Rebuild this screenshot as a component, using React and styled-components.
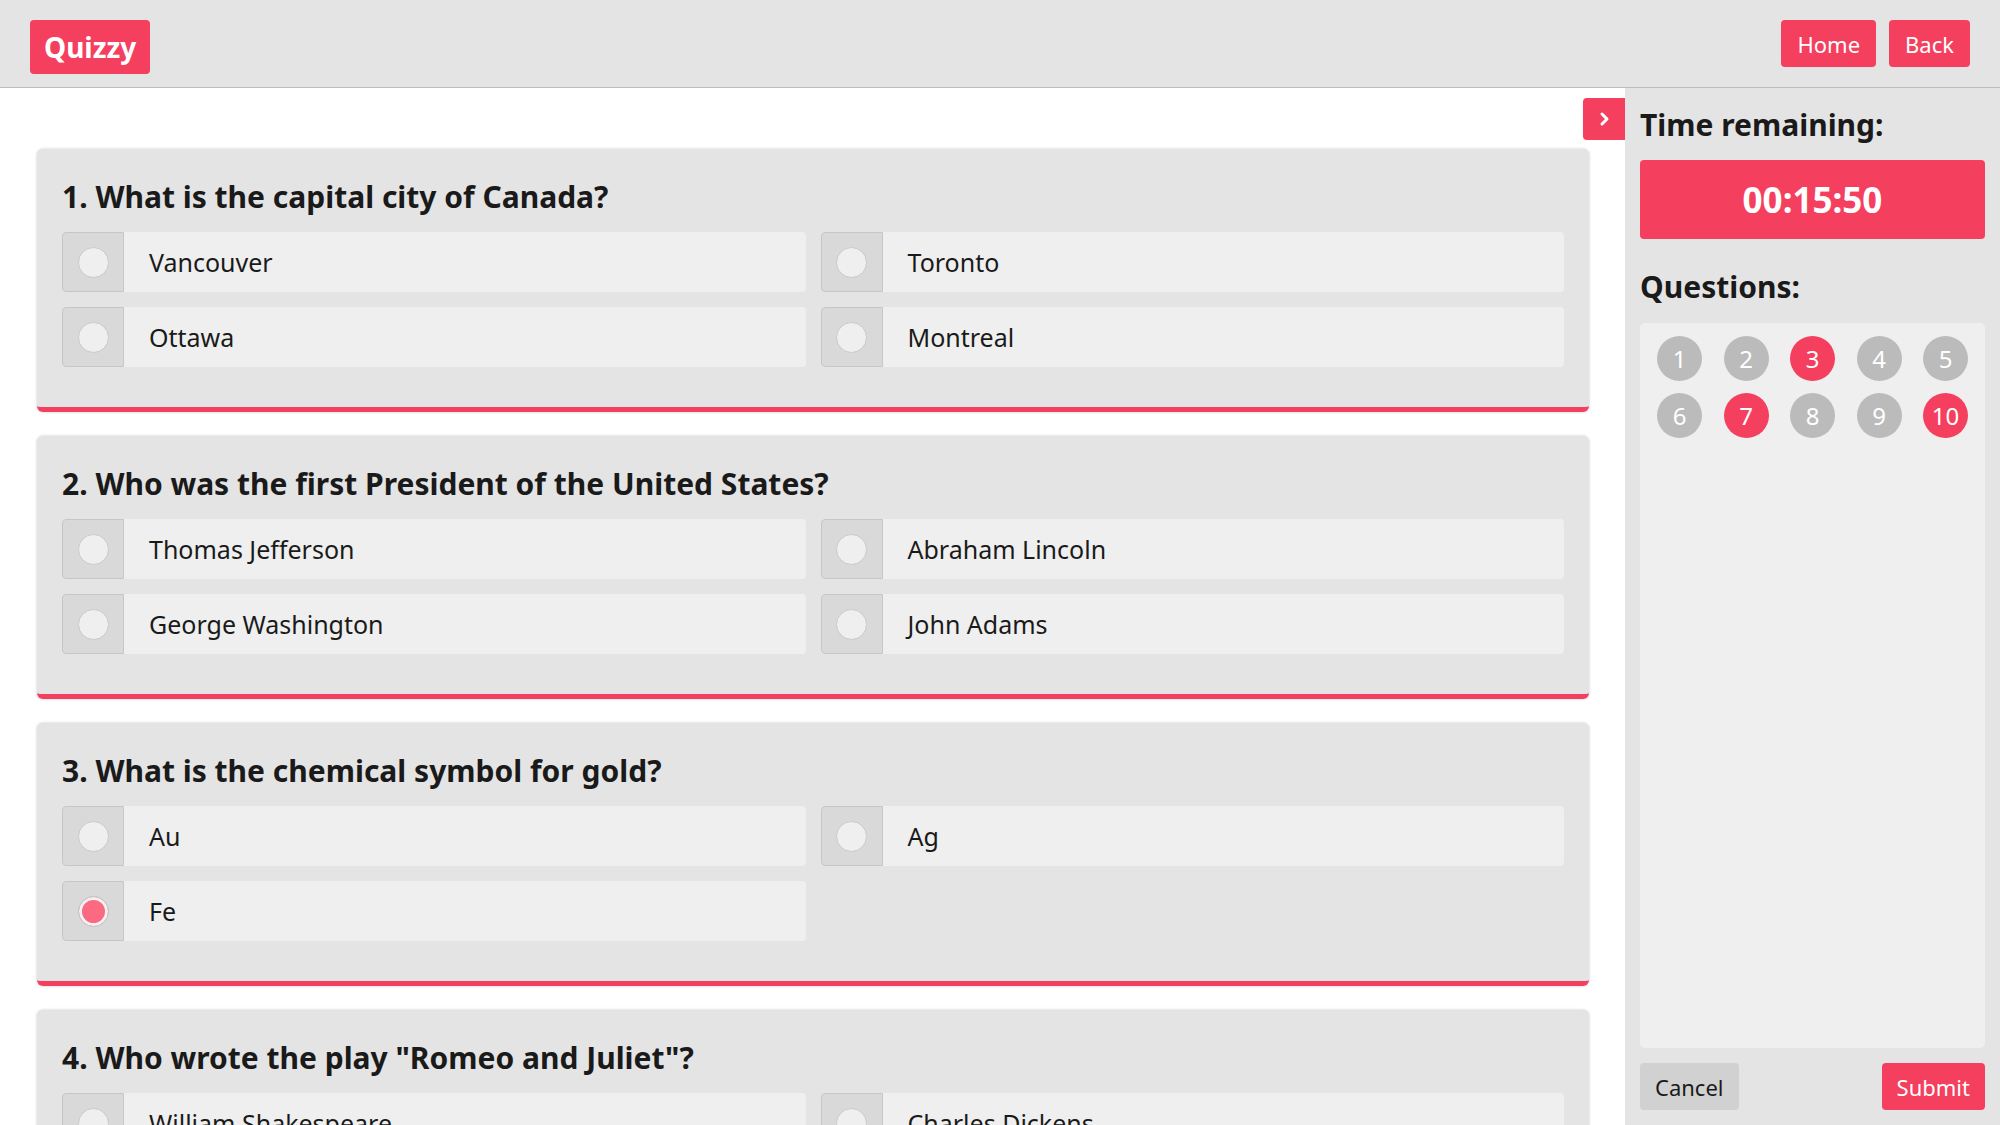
import styled, { createGlobalStyle } from "styled-components";

const PINK = "#f43f5e";

const questions = [
  {
    text: "What is the capital city of Canada?",
    options: ["Vancouver", "Toronto", "Ottawa", "Montreal"],
    selected: null,
  },
  {
    text: "Who was the first President of the United States?",
    options: ["Thomas Jefferson", "Abraham Lincoln", "George Washington", "John Adams"],
    selected: null,
  },
  {
    text: "What is the chemical symbol for gold?",
    options: ["Au", "Ag", "Fe"],
    selected: 2,
  },
  {
    text: 'Who wrote the play "Romeo and Juliet"?',
    options: ["William Shakespeare", "Charles Dickens", "Jane Austen", "Mark Twain"],
    selected: null,
  },
];

const answered = [3, 7, 10];

const GlobalStyle = createGlobalStyle`
  * { box-sizing: border-box; }
  body {
    margin: 0;
    font-family: "Noto Sans", "Open Sans", sans-serif;
    color: #1a1a1a;
  }
`;

const Page = styled.div`
  height: 100vh;
  display: flex;
  flex-direction: column;
  overflow: hidden;
`;

const Header = styled.header`
  height: 88px;
  flex-shrink: 0;
  background: #e4e4e4;
  border-bottom: 1px solid #bdbdbd;
  display: flex;
  align-items: flex-start;
  justify-content: space-between;
  padding: 20px 30px 0 30px;
`;

const Logo = styled.div`
  background: ${PINK};
  color: #fff;
  font-weight: 700;
  font-size: 28px;
  height: 54px;
  padding: 0 14px;
  display: flex;
  align-items: center;
  border-radius: 4px;
`;

const Nav = styled.div`
  display: flex;
  gap: 13px;
`;

const NavButton = styled.button`
  background: ${PINK};
  color: #fff;
  border: none;
  border-radius: 4px;
  height: 47px;
  padding: 0 16px;
  font-family: inherit;
  font-size: 22px;
`;

const Body = styled.div`
  flex: 1;
  display: flex;
  min-height: 0;
`;

const Main = styled.main`
  flex: 1;
  overflow: hidden;
  padding: 61px 36px 0 37px;
  display: flex;
  flex-direction: column;
  gap: 24px;
  background: #fff;
`;

const Card = styled.section`
  background: #e4e4e4;
  border-radius: 6px;
  border-bottom: 5px solid ${PINK};
  box-shadow: 0 0 3px rgba(0, 0, 0, 0.22);
  padding: 20px 25px 40px 25px;
  flex-shrink: 0;
`;

const Title = styled.h2`
  margin: 0 0 7px 0;
  font-size: 30px;
  font-weight: 700;
  line-height: 56px;
`;

const Options = styled.div`
  display: grid;
  grid-template-columns: 1fr 1fr;
  gap: 15px 15px;
`;

const Option = styled.label`
  display: flex;
  align-items: center;
  height: 60px;
  background: #efefef;
  border-radius: 4px;
`;

const RadioBox = styled.span`
  width: 62px;
  height: 100%;
  background: #d9d9d9;
  border: 1px solid #c6c6c6;
  border-radius: 4px 0 0 4px;
  display: flex;
  align-items: center;
  justify-content: center;
  flex-shrink: 0;
`;

const Radio = styled.span`
  width: 31px;
  height: 31px;
  border-radius: 50%;
  border: 1px solid #cacaca;
  background: ${(p) => (p.$checked ? "#fb6a80" : "#efefef")};
  box-shadow: ${(p) => (p.$checked ? "inset 0 0 0 3px #f2f2f2" : "none")};
`;

const OptionText = styled.span`
  font-size: 25px;
  padding-left: 25px;
`;

const Sidebar = styled.aside`
  width: 375px;
  flex-shrink: 0;
  background: #e4e4e4;
  position: relative;
  padding: 15px 15px 15px 15px;
  display: flex;
  flex-direction: column;
`;

const Toggle = styled.button`
  position: absolute;
  left: -42px;
  top: 10px;
  width: 42px;
  height: 42px;
  border: none;
  background: ${PINK};
  border-radius: 4px 0 0 4px;
  display: flex;
  align-items: center;
  justify-content: center;
  padding: 0;
`;

const SideTitle = styled.h3`
  margin: 0;
  font-size: 30px;
  font-weight: 700;
  line-height: 44px;
`;

const Timer = styled.div`
  margin-top: 13px;
  height: 79px;
  background: ${PINK};
  border-radius: 4px;
  color: #fff;
  font-weight: 700;
  font-size: 35px;
  display: flex;
  align-items: center;
  justify-content: center;
  margin-bottom: 26px;
`;

const Panel = styled.div`
  flex: 1;
  margin-top: 14px;
  background: #efefef;
  border-radius: 5px;
  padding: 13px 17px;
`;

const Grid = styled.div`
  display: grid;
  grid-template-columns: repeat(5, 45px);
  justify-content: space-between;
  row-gap: 12px;
`;

const Bubble = styled.span`
  width: 45px;
  height: 45px;
  border-radius: 50%;
  background: ${(p) => (p.$active ? PINK : "#bbbbbb")};
  color: #fff;
  font-size: 24px;
  display: flex;
  align-items: center;
  justify-content: center;
`;

const Actions = styled.div`
  display: flex;
  justify-content: space-between;
  margin-top: 15px;
`;

const ActionButton = styled.button`
  height: 47px;
  border: none;
  border-radius: 4px;
  font-family: inherit;
  font-size: 22px;
  padding: 0 15px;
  background: ${(p) => (p.$primary ? PINK : "#d1d1d1")};
  color: ${(p) => (p.$primary ? "#fff" : "#1a1a1a")};
`;

export default function App() {
  return (
    <Page>
      <GlobalStyle />
      <Header>
        <Logo>Quizzy</Logo>
        <Nav>
          <NavButton>Home</NavButton>
          <NavButton>Back</NavButton>
        </Nav>
      </Header>
      <Body>
        <Main>
          {questions.map((q, i) => (
            <Card key={i}>
              <Title>
                {i + 1}. {q.text}
              </Title>
              <Options>
                {q.options.map((o, j) => (
                  <Option key={o}>
                    <RadioBox>
                      <Radio $checked={q.selected === j} />
                    </RadioBox>
                    <OptionText>{o}</OptionText>
                  </Option>
                ))}
              </Options>
            </Card>
          ))}
        </Main>
        <Sidebar>
          <Toggle>
            <svg width="18" height="18" viewBox="0 0 18 18">
              <path d="M7 4l5 5-5 5" fill="none" stroke="#fff" strokeWidth="3" strokeLinecap="round" strokeLinejoin="round" />
            </svg>
          </Toggle>
          <SideTitle>Time remaining:</SideTitle>
          <Timer>00:15:50</Timer>
          <SideTitle>Questions:</SideTitle>
          <Panel>
            <Grid>
              {Array.from({ length: 10 }, (_, i) => (
                <Bubble key={i} $active={answered.includes(i + 1)}>
                  {i + 1}
                </Bubble>
              ))}
            </Grid>
          </Panel>
          <Actions>
            <ActionButton>Cancel</ActionButton>
            <ActionButton $primary>Submit</ActionButton>
          </Actions>
        </Sidebar>
      </Body>
    </Page>
  );
}
